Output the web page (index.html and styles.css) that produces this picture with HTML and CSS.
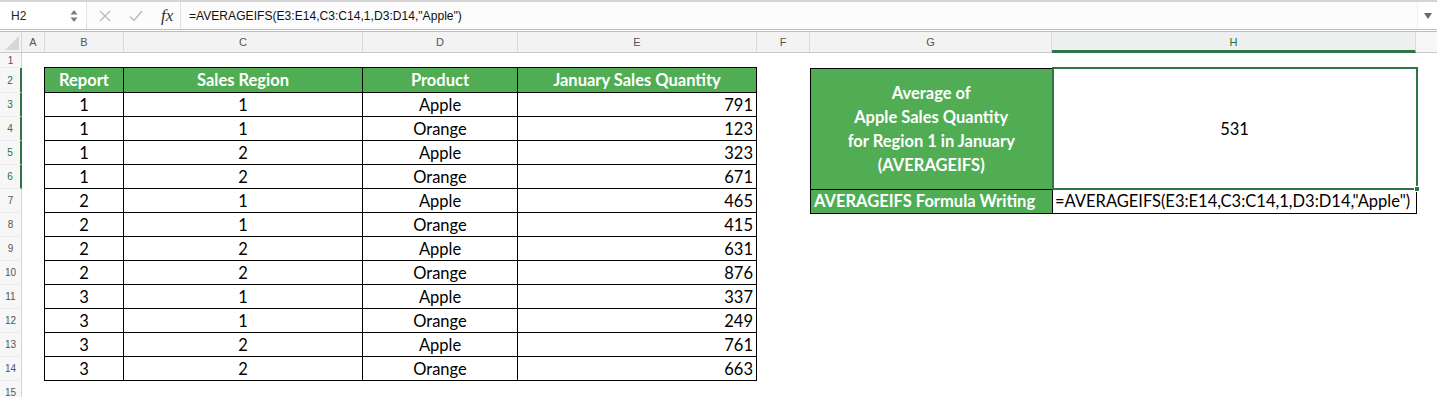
FILE: index.html
```html
<!DOCTYPE html>
<html>
<head>
<meta charset="utf-8">
<link rel="stylesheet" href="styles.css">
</head>
<body>
<div class="app">
  <div class="fbar">
    <div class="namebox">
      <span class="nb-text">H2</span>
      <span class="spin"><svg width="8" height="14" viewBox="0 0 8 14"><path d="M4 1 L7.5 5.5 L0.5 5.5 Z" fill="#7a7a7a"/><path d="M4 13 L7.5 8.5 L0.5 8.5 Z" fill="#7a7a7a"/></svg></span>
    </div>
    <div class="fbtns">
      <svg class="ic-x" width="12" height="12" viewBox="0 0 12 12"><path d="M1 1 L11 11 M11 1 L1 11" stroke="#b8b8b8" stroke-width="1.3" fill="none"/></svg>
      <svg class="ic-ok" width="14" height="12" viewBox="0 0 14 12"><path d="M1 6.5 L5 10.5 L13 1" stroke="#b8b8b8" stroke-width="1.3" fill="none"/></svg>
      <span class="fx">fx</span>
    </div>
    <div class="ftext">=AVERAGEIFS(E3:E14,C3:C14,1,D3:D14,"Apple")</div>
    <div class="fdrop"><svg width="10" height="8" viewBox="0 0 10 8"><path d="M1 1 H9 L5 7 Z" fill="#6a6a6a"/></svg></div>
  </div>

  <div class="colhdr">
    <div class="corner"><svg width="14" height="14" viewBox="0 0 14 14"><path d="M14 0 V14 H0 Z" fill="#d6d6d6"/></svg></div>
    <div class="ch c-a">A</div>
    <div class="ch c-b">B</div>
    <div class="ch c-c">C</div>
    <div class="ch c-d">D</div>
    <div class="ch c-e">E</div>
    <div class="ch c-f">F</div>
    <div class="ch c-g">G</div>
    <div class="ch c-h sel">H</div>
    <div class="ch c-rest"></div>
  </div>

  <div class="sheet">
    <div class="rowhdr">
      <div class="rh r1">1</div>
      <div class="rh r2 sel">2</div>
      <div class="rh sel">3</div>
      <div class="rh sel">4</div>
      <div class="rh sel">5</div>
      <div class="rh sel">6</div>
      <div class="rh">7</div>
      <div class="rh">8</div>
      <div class="rh">9</div>
      <div class="rh">10</div>
      <div class="rh">11</div>
      <div class="rh">12</div>
      <div class="rh">13</div>
      <div class="rh">14</div>
      <div class="rh">15</div>
    </div>
    <div class="cells">
      <table class="data">
        <colgroup><col class="w-b"><col class="w-c"><col class="w-d"><col class="w-e"></colgroup>
        <thead>
          <tr class="hrow"><th>Report</th><th>Sales Region</th><th>Product</th><th>January Sales Quantity</th></tr>
        </thead>
        <tbody>
          <tr><td>1</td><td>1</td><td>Apple</td><td class="num">791</td></tr>
          <tr><td>1</td><td>1</td><td>Orange</td><td class="num">123</td></tr>
          <tr><td>1</td><td>2</td><td>Apple</td><td class="num">323</td></tr>
          <tr><td>1</td><td>2</td><td>Orange</td><td class="num">671</td></tr>
          <tr><td>2</td><td>1</td><td>Apple</td><td class="num">465</td></tr>
          <tr><td>2</td><td>1</td><td>Orange</td><td class="num">415</td></tr>
          <tr><td>2</td><td>2</td><td>Apple</td><td class="num">631</td></tr>
          <tr><td>2</td><td>2</td><td>Orange</td><td class="num">876</td></tr>
          <tr><td>3</td><td>1</td><td>Apple</td><td class="num">337</td></tr>
          <tr><td>3</td><td>1</td><td>Orange</td><td class="num">249</td></tr>
          <tr><td>3</td><td>2</td><td>Apple</td><td class="num">761</td></tr>
          <tr><td>3</td><td>2</td><td>Orange</td><td class="num">663</td></tr>
        </tbody>
      </table>

      <table class="summary">
        <colgroup><col class="w-g"><col class="w-h"></colgroup>
        <tbody>
          <tr class="big">
            <td class="label-big">Average of<br>Apple Sales Quantity<br>for Region 1 in January<br>(AVERAGEIFS)</td>
            <td class="result"><span>531</span><span class="handle"></span></td>
          </tr>
          <tr class="frow">
            <td class="label-small">AVERAGEIFS Formula Writing</td>
            <td class="formula">=AVERAGEIFS(E3:E14,C3:C14,1,D3:D14,"Apple")</td>
          </tr>
        </tbody>
      </table>
    </div>
  </div>
</div>
</body>
</html>
```

FILE: styles.css
```css
* { box-sizing: border-box; }
html, body { margin: 0; padding: 0; background: #fff; }
body { width: 1437px; height: 397px; overflow: hidden; font-family: "Liberation Sans", Arial, sans-serif; }

.app { display: flex; flex-direction: column; }

/* formula bar */
.fbar {
  height: 32px;
  display: flex;
  align-items: center;
  border-top: 2px solid #d4d4d4;
  border-bottom: 3px double #bdbdbd;
  background: #fcfcfc;
  color: #222;
}
.namebox {
  width: 87px;
  height: 27px;
  display: flex;
  align-items: center;
  justify-content: space-between;
  padding: 0 8px 0 11px;
  background: #fff;
  border-right: 1px solid #e2e2e2;
  font-size: 12px;
}
.spin { display: flex; align-items: center; }
.fbtns {
  width: 94px;
  height: 27px;
  display: flex;
  align-items: center;
  padding-left: 12px;
  border-right: 1px solid #e2e2e2;
  margin-right: 8px;
}
.ic-x { margin-right: 18px; }
.ic-ok { margin-right: 18px; }
.fx { font-family: "Liberation Serif", "Times New Roman", serif; font-style: italic; font-size: 17px; color: #333; line-height: 1; }
.ftext { flex: 1; font-size: 12.1px; color: #111; }
.fdrop { width: 20px; height: 27px; display: flex; align-items: center; justify-content: center; border-left: 1px solid #f0f0f0; background: #fff; }

/* column headers */
.colhdr {
  height: 21px;
  display: flex;
  background: #f3f3f3;
  border-bottom: 1px solid #c9c9c9;
  font-size: 11px;
  color: #555;
}
.corner { width: 22px; border-right: 1px solid #d5d5d5; display: flex; align-items: flex-end; justify-content: flex-end; padding: 0 2px 2px 0; }
.ch { display: flex; align-items: center; justify-content: center; border-right: 1px solid #dadada; }
.c-a { width: 23px; }
.c-b { width: 79px; }
.c-c { width: 239px; }
.c-d { width: 155px; }
.c-e { width: 239px; }
.c-f { width: 53px; }
.c-g { width: 242px; }
.c-h { width: 364px; }
.c-rest { flex: 1; border-right: none; background: #f6f6f6; }
.ch.sel { background: #eef0ef; color: #217346; border-bottom: 3px solid #2e7446; padding-top: 2px; margin-bottom: -1px; }

/* sheet */
.sheet { display: flex; }
.rowhdr { width: 22px; display: flex; flex-direction: column; background: #f7f7f7; border-right: 1px solid #d3d3d3; }
.rh { height: 24px; display: flex; align-items: center; justify-content: center; font-size: 10px; color: #555; border-bottom: 1px solid #ededed; }
.rh.r1 { height: 15px; }
.rh.r2 { height: 25px; }
.rh.sel { color: #217346; border-right: 2px solid #2e7446; margin-right: -1px; }

.cells {
  flex: 1;
  display: flex;
  align-items: flex-start;
  padding: 14px 0 0 22px;
  font-family: Lato, "Noto Sans", sans-serif;
  font-size: 16.5px;
  color: #000;
}

table { border-collapse: collapse; table-layout: fixed; }
.data { width: 713px; }
.w-b { width: 79px; }
.w-c { width: 239px; }
.w-d { width: 155px; }
.w-e { width: 239px; }
.data th, .data td { border: 1px solid #000; padding: 0 3px; height: 24px; text-align: center; white-space: nowrap; line-height: 22px; }
.data th { background: #50ad54; color: #fff; font-weight: 700; height: 25px; }
.data td.num { text-align: right; }

.summary { width: 606px; margin-left: 53px; }
.w-g { width: 242px; }
.w-h { width: 364px; }
.summary td { border: 1px solid #000; padding: 0 3px; white-space: nowrap; }
.label-big { background: #50ad54; color: #fff; font-weight: 700; text-align: center; line-height: 24px; height: 121px; padding-top: 0; }
.result { position: relative; text-align: center; border: 2px solid #2e7446 !important; }
.handle { position: absolute; right: -4px; bottom: -4px; width: 6px; height: 6px; background: #2e7446; border: 1px solid #fff; }
.frow td { height: 24px; line-height: 22px; }
.label-small { background: #50ad54; color: #fff; font-weight: 700; text-align: left; }
.formula { text-align: left; overflow: visible; padding-left: 2px !important; }
```
